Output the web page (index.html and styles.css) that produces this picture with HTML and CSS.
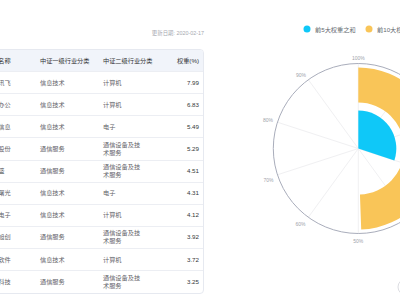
FILE: index.html
```html
<!DOCTYPE html>
<html lang="zh">
<head>
<meta charset="utf-8">
<link rel="stylesheet" href="styles.css">
</head>
<body>
<div class="page">
  <section class="left">
    <div class="date">更新日期: 2020-02-17</div>
    <div class="table">
      <div class="row head">
        <div class="cell">股票名称</div><div class="cell">中证一级行业分类</div><div class="cell">中证二级行业分类</div><div class="cell num">权重(%)</div>
      </div>
      <div class="row"><div class="cell">科大讯飞</div><div class="cell">信息技术</div><div class="cell">计算机</div><div class="cell num">7.99</div></div>
      <div class="row"><div class="cell">金山办公</div><div class="cell">信息技术</div><div class="cell">计算机</div><div class="cell num">6.83</div></div>
      <div class="row"><div class="cell">海光信息</div><div class="cell">信息技术</div><div class="cell">电子</div><div class="cell num">5.49</div></div>
      <div class="row"><div class="cell">紫光股份</div><div class="cell">通信服务</div><div class="cell">通信设备及技术服务</div><div class="cell num">5.29</div></div>
      <div class="row"><div class="cell">新易盛</div><div class="cell">通信服务</div><div class="cell">通信设备及技术服务</div><div class="cell num">4.51</div></div>
      <div class="row"><div class="cell">中科曙光</div><div class="cell">信息技术</div><div class="cell">电子</div><div class="cell num">4.31</div></div>
      <div class="row"><div class="cell">恒生电子</div><div class="cell">信息技术</div><div class="cell">计算机</div><div class="cell num">4.12</div></div>
      <div class="row"><div class="cell">中际旭创</div><div class="cell">通信服务</div><div class="cell">通信设备及技术服务</div><div class="cell num">3.92</div></div>
      <div class="row"><div class="cell">宝信软件</div><div class="cell">信息技术</div><div class="cell">计算机</div><div class="cell num">3.72</div></div>
      <div class="row last"><div class="cell">光迅科技</div><div class="cell">通信服务</div><div class="cell">通信设备及技术服务</div><div class="cell num">3.25</div></div>
    </div>
  </section>
  <svg class="chart" width="196" height="300" viewBox="204 0 196 300" xmlns="http://www.w3.org/2000/svg">
    <g class="legend">
      <circle cx="307" cy="29" r="3.5" fill="#0fc8f8"/>
      <text x="315" y="29" class="legend-text">前5大权重之和</text>
      <circle cx="369" cy="29" r="3.5" fill="#f9c558"/>
      <text x="377" y="29" class="legend-text">前10大权重之和</text>
    </g>
    <g stroke="#f0f0f2" stroke-width="1">
      <line x1="358.3" y1="148.5" x2="358.3" y2="63.5"/>
      <line x1="358.3" y1="148.5" x2="408.26" y2="79.73"/>
      <line x1="358.3" y1="148.5" x2="439.14" y2="122.23"/>
      <line x1="358.3" y1="148.5" x2="439.14" y2="174.77"/>
      <line x1="358.3" y1="148.5" x2="408.26" y2="217.27"/>
      <line x1="358.3" y1="148.5" x2="358.3" y2="233.5"/>
      <line x1="358.3" y1="148.5" x2="308.34" y2="217.27"/>
      <line x1="358.3" y1="148.5" x2="277.46" y2="174.77"/>
      <line x1="358.3" y1="148.5" x2="277.46" y2="122.23"/>
      <line x1="358.3" y1="148.5" x2="308.34" y2="79.73"/>
    </g>
    <circle cx="358.3" cy="148.5" r="85" fill="none" stroke="#a9adbb" stroke-width="1"/>
    <path d="M 358.3 67.5 A 81 81 0 0 1 361.2 229.45 L 359.95 194.47 A 46 46 0 0 0 358.3 102.5 Z" fill="#f9c558"/>
    <path d="M 358.3 148.5 L 358.3 110.5 A 38 38 0 0 1 394.36 160.49 Z" fill="#0fc8f8"/>
    <g class="axis-label">
      <text x="358.3" y="58">100%</text>
      <text x="301" y="75">90%</text>
      <text x="268" y="119.5">80%</text>
      <text x="268.5" y="180">70%</text>
      <text x="300.5" y="224">60%</text>
      <text x="358.3" y="240.7">50%</text>
    </g>
    <circle cx="406" cy="287" r="8" fill="none" stroke="#dcdde2" stroke-width="1"/>
  </svg>
</div>
</body>
</html>
```
FILE: styles.css
```css
html, body {
  margin: 0;
  padding: 0;
  background: #ffffff;
}
body {
  width: 400px;
  height: 300px;
  overflow: hidden;
  font-family: "Liberation Sans", "Noto Sans CJK SC", sans-serif;
}
.page {
  display: flex;
  align-items: flex-start;
}
.left {
  width: 204px;
  flex: none;
}
.date {
  margin-top: 28px;
  height: 10px;
  line-height: 10px;
  font-size: 5.4px;
  color: #a6a9b0;
  text-align: right;
}
.table {
  margin-top: 11px;
  margin-left: -22px;
  width: 226px;
  box-sizing: border-box;
  border: 1px solid #e6e9f0;
  border-radius: 4px;
  overflow: hidden;
}
.row {
  display: grid;
  grid-template-columns: 54px 63px 48px 1fr;
  align-items: center;
  height: 22.13px;
  box-sizing: border-box;
  border-bottom: 1px solid #eceef3;
  font-size: 6.2px;
  color: #5f6268;
}
.row.last {
  border-bottom: none;
}
.row.head {
  height: 22px;
  background: #f1f4fa;
  color: #303133;
  white-space: nowrap;
}
.cell {
  padding-left: 7px;
  line-height: 8px;
}
.cell.num {
  text-align: right;
  padding-right: 4px;
  color: #333639;
}
.chart {
  display: block;
  flex: none;
}
.legend-text {
  font-size: 6.2px;
  fill: #666a70;
  dominant-baseline: central;
}
.axis-label text {
  font-size: 5px;
  fill: #a0a3ab;
  text-anchor: middle;
  dominant-baseline: central;
}
```
